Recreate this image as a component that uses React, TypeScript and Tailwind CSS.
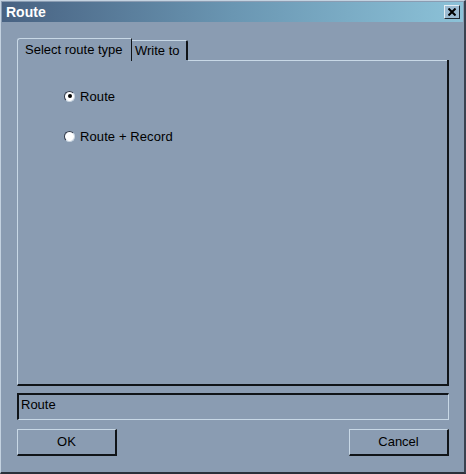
import React from "react";

const font = { fontFamily: '"Liberation Sans", Arial, sans-serif' };

function Radio({ checked, label }: { checked?: boolean; label: string }) {
    return (
        <div className="flex items-center gap-[5px] h-[16px]">
            <span className="relative w-[11px] h-[11px] rounded-full bg-white border border-t-[#303848] border-l-[#303848] border-r-[#c8d4e0] border-b-[#c8d4e0] flex items-center justify-center">
                {checked && <span className="w-[4px] h-[4px] rounded-full bg-black" />}
            </span>
            <span className="text-[13px] text-black leading-none tracking-[0.1px]">{label}</span>
        </div>
    )
}

export default function App() {
    return (
        <div style={font} className="w-[466px] h-[474px] bg-[#8a9cb2] border-t border-l border-t-[#c4d2e0] border-l-[#c4d2e0] border-r-2 border-b-2 border-r-[#3a4250] border-b-[#2a303a] flex flex-col select-none">
            {/* title bar */}
            <div className="mx-px mt-px h-[20px] flex items-center justify-between pl-[4px] pr-[3px] bg-gradient-to-r from-[#486282] via-[#6a96b2] to-[#8cc2d8]">
                <span className="text-white font-bold text-[14px] leading-none">Route</span>
                <button className="w-[16px] h-[14px] bg-[#9cbcd2] border border-t-[#e4eef4] border-l-[#e4eef4] border-r-[#202830] border-b-[#202830] flex items-center justify-center">
                    <svg width="8" height="8" viewBox="0 0 8 8">
                        <path d="M0.5 0.5 L7.5 7.5 M7.5 0.5 L0.5 7.5" stroke="#000" strokeWidth="2" />
                    </svg>
                </button>
            </div>

            <div className="flex flex-col pl-[16px] pr-[15px] mt-[15px]">
                {/* tabs */}
                <div className="flex items-end h-[23px]">
                    <div className="h-[23px] w-[115px] border-t border-l border-t-[#c8d8e6] border-l-[#c8d8e6] rounded-tl-[3px] border-r border-r-[#101418] flex items-center pl-[7px] text-[13px] text-black bg-[#8a9cb2] relative z-10 -mb-px pb-px">
                        Select route type
                    </div>
                    <div className="h-[20px] w-[56px] border-t border-t-[#c8d8e6] border-r-2 border-r-[#101418] rounded-tr-[2px] flex items-center pl-[3px] text-[13px] text-black">
                        Write to
                    </div>
                    <div className="flex-1" />
                </div>

                {/* panel */}
                <div className="h-[326px] border-l border-l-[#c8d8e6] border-r-2 border-r-[#101418] border-b-2 border-b-[#101418] relative">
                    <div className="absolute top-0 left-[170px] right-0 h-px bg-[#c8d8e6]" />
                    <div className="flex flex-col gap-[24px] pl-[46px] pt-[28px]">
                        <Radio checked label="Route" />
                        <Radio label="Route + Record" />
                    </div>
                </div>

                {/* status */}
                <div className="mt-[7px] h-[27px] border-t-2 border-l-2 border-t-[#101418] border-l-[#101418] border-b border-r border-b-[#c8d8e6] border-r-[#c8d8e6] flex items-center pl-[2px] pb-[4px] text-[13px] text-black">
                    Route
                </div>

                {/* buttons */}
                <div className="mt-[9px] flex justify-between">
                    <button className="w-[100px] h-[27px] border-t border-l border-t-[#c8d8e6] border-l-[#c8d8e6] border-b-2 border-r-2 border-b-[#101418] border-r-[#101418] text-[13px] text-black flex items-center justify-center">
                        OK
                    </button>
                    <button className="w-[100px] h-[27px] border-t border-l border-t-[#c8d8e6] border-l-[#c8d8e6] border-b-2 border-r-2 border-b-[#101418] border-r-[#101418] text-[13px] text-black flex items-center justify-center">
                        Cancel
                    </button>
                </div>
            </div>
        </div>
    )
}
